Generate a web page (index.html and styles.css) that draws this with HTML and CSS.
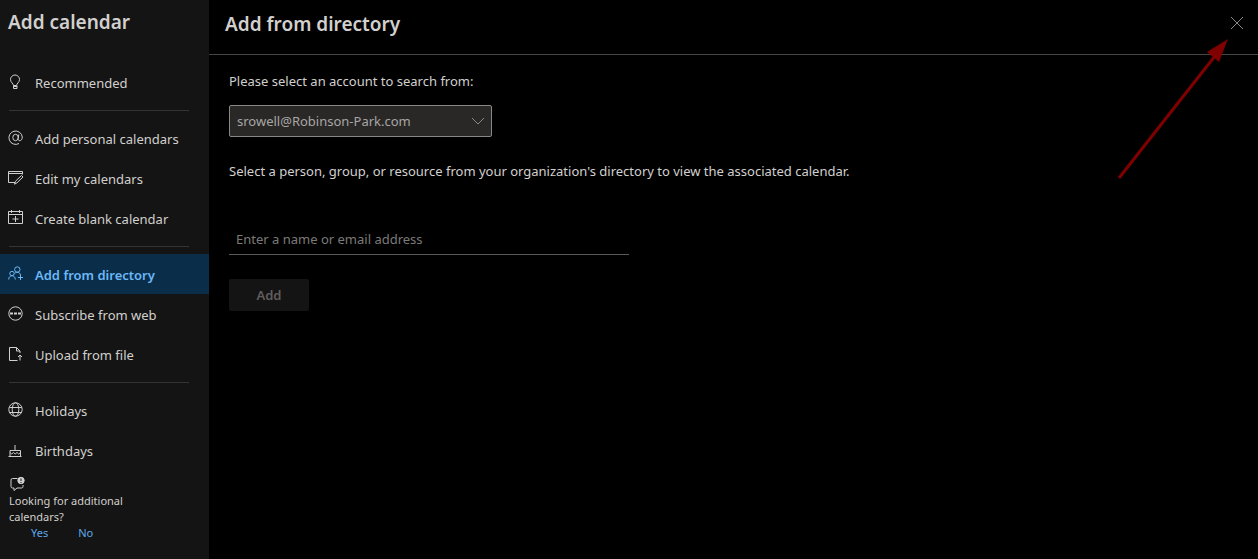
FILE: index.html
```html
<!DOCTYPE html>
<html lang="en">
<head>
    <meta charset="UTF-8">
    <meta name="viewport" content="width=device-width, initial-scale=1.0">
    <title>Add calendar</title>
    <link rel="stylesheet" href="styles.css">
</head>
<body>
    <div class="app">
        <aside class="sidebar">
            <h1>Add calendar</h1>
            <nav class="menu">
                <button type="button" class="menu-item">
                    <svg class="icon" viewBox="0 0 16 16"><path d="M5.500 11.500C5.500 9.500 2.500 8.500 2.500 5.500a4.500 4.500 0 0 1 9 0c0 3-3 4-3 6zM5.500 11.500v3h3.500v-3M5.500 12.500h3.500"/></svg>
                    <span>Recommended</span>
                </button>
                <hr>
                <button type="button" class="menu-item">
                    <svg class="icon" viewBox="0 0 16 16"><path d="M11 13.500A6.700 6.700 0 1 1 14.300 7c0 2.500-1.300 3.700-2.500 3.700S10 9.800 10.200 8.500l.6-4"/><ellipse cx="7.500" cy="7.500" rx="2.700" ry="3.200"/></svg>
                    <span>Add personal calendars</span>
                </button>
                <button type="button" class="menu-item">
                    <svg class="icon" viewBox="0 0 16 16"><path d="M7 12.500H.5v-11h14v3M.5 3.500h14M6.500 14.200l1-3 6-5.700 1.500 1.500-6 5.800z"/></svg>
                    <span>Edit my calendars</span>
                </button>
                <button type="button" class="menu-item">
                    <svg class="icon" viewBox="0 0 16 16"><path d="M.5 1.500h14v12H.5zM.5 4.500h14M3.500 0v3M11.500 0v3M7.500 6v6M4.500 9h6"/></svg>
                    <span>Create blank calendar</span>
                </button>
                <hr>
                <button type="button" class="menu-item active">
                    <svg class="icon" viewBox="0 0 16 16"><circle cx="9.300" cy="3.500" r="2.700"/><circle cx="4" cy="7.500" r="2.200"/><path d="M.7 13.500c0-5 6.600-5 6.600 0M6.500 7.500c2-2 5.500-1.500 6 1.500M12.500 9v5M10 11.500h5"/></svg>
                    <span>Add from directory</span>
                </button>
                <button type="button" class="menu-item">
                    <svg class="icon" viewBox="0 0 16 16"><circle cx="7.500" cy="7.500" r="6.700"/><path class="thick" d="M2 7.500h3M6 7.500h3M10 7.500h3"/></svg>
                    <span>Subscribe from web</span>
                </button>
                <button type="button" class="menu-item">
                    <svg class="icon" viewBox="0 0 16 16"><path d="M9.500 14.500h-8v-13h7l3.500 3.500v2M8.500 1.500v3.500h3.500M12 14.500V9M10 11l2-2 2 2"/></svg>
                    <span>Upload from file</span>
                </button>
                <hr>
                <button type="button" class="menu-item">
                    <svg class="icon" viewBox="0 0 16 16"><circle cx="7.500" cy="7.500" r="6.700"/><ellipse cx="7.500" cy="7.500" rx="3.300" ry="6.700"/><path d="M1.500 5.500h12M1.500 10.500h12"/></svg>
                    <span>Holidays</span>
                </button>
                <button type="button" class="menu-item">
                    <svg class="icon" viewBox="0 0 16 16"><path d="M.5 14.500h13M2 14.500v-6h10.500v6M2 10.500l1.700 1.500 1.700-1.500 1.800 1.500L9 10.500l1.700 1.500 1.800-1.500M7 3v5"/></svg>
                    <span>Birthdays</span>
                </button>
            </nav>
            <div class="feedback">
                <svg class="icon" viewBox="0 0 16 16"><path d="M8.500 2.500h-5A1.500 1.500 0 0 0 2 4v6.500A1.500 1.500 0 0 0 3.500 12H5v2.500L8 12h4.500a1.500 1.500 0 0 0 1.500-1.500V9"/><circle class="dot" cx="12" cy="4.500" r="3.200"/><path class="mark" d="M12 2.500v2.500M12 6v1"/></svg>
                <p>Looking for additional calendars?</p>
                <div class="answers">
                    <a href="#">Yes</a>
                    <a href="#">No</a>
                </div>
            </div>
        </aside>

        <main class="panel">
            <header class="panel-header">
                <h2>Add from directory</h2>
                <button type="button" class="close" aria-label="Close">
                    <svg viewBox="0 0 12 12"><path d="M0 0l12 12M12 0L0 12"/></svg>
                </button>
            </header>
            <form class="directory-form">
                <label for="account">Please select an account to search from:</label>
                <div class="select-wrap">
                    <select id="account" name="account">
                        <option>srowell@Robinson-Park.com</option>
                    </select>
                    <svg class="chevron" viewBox="0 0 12 12"><path d="M0 3l6 6 6-6"/></svg>
                </div>
                <label for="person">Select a person, group, or resource from your organization's directory to view the associated calendar.</label>
                <input type="text" id="person" name="person" placeholder="Enter a name or email address">
                <button type="submit" class="add" disabled>Add</button>
            </form>
        </main>

        <!-- pointer to the close button -->
        <svg class="arrow" viewBox="0 0 112 142"><path class="shaft" d="M2 140L98 18"/><path class="head" d="M111 1L90 14L102 24z"/></svg>
    </div>
</body>
</html>
```

FILE: styles.css
```css
* {
    box-sizing: border-box;
}
body {
    margin: 0;
    background-color: #000;
    color: #d2d0ce;
    font-family: 'Segoe UI', 'Noto Sans', sans-serif;
    font-size: 13px;
    line-height: 20px;
}
h1, h2, p {
    margin: 0;
}
h1, h2 {
    font-size: 19px;
    font-weight: 600;
    line-height: 28px;
}
button, input, select {
    font: inherit;
}
.app {
    position: relative;
    display: flex;
    min-height: 100vh;
}
.sidebar {
    flex: 0 0 209px;
    background-color: #141414;
}
.sidebar h1 {
    padding: 8px 8px 26px;
}
.menu-item {
    display: flex;
    align-items: center;
    gap: 11px;
    width: 100%;
    height: 40px;
    padding: 0 8px;
    border: none;
    background: none;
    color: inherit;
    text-align: left;
    cursor: pointer;
}
.menu-item span {
    padding-top: 2px;
}
.menu-item.active {
    background-color: #0a2e4a;
    color: #6cb8f6;
    font-weight: 600;
}
.menu hr {
    height: 1px;
    margin: 8px 20px 7px 9px;
    border: none;
    background-color: #343434;
}
.icon {
    display: block;
    flex: none;
    width: 16px;
    height: 16px;
    fill: none;
    stroke: currentColor;
}
.icon .thick {
    stroke-width: 2;
}
.feedback {
    padding: 6px 64px 16px 9px;
    font-size: 11px;
    line-height: 16px;
}
.feedback .icon {
    margin-bottom: 1px;
}
.feedback .dot {
    fill: #d2d0ce;
}
.feedback .mark {
    stroke: #141414;
}
.answers {
    display: flex;
    gap: 30px;
    padding-left: 22px;
}
.answers a {
    color: #5ca8ea;
    text-decoration: none;
}
.panel {
    flex: 1;
    min-width: 0;
}
.panel-header {
    display: flex;
    justify-content: space-between;
    align-items: center;
    padding: 10px 15px 16px 16px;
    border-bottom: 1px solid #484644;
}
.close {
    display: flex;
    padding: 0 0 2px;
    border: none;
    background: none;
    color: #8a8886;
    cursor: pointer;
}
.close svg, .chevron {
    width: 12px;
    height: 12px;
    fill: none;
    stroke: currentColor;
}
.directory-form {
    display: flex;
    flex-direction: column;
    align-items: flex-start;
    padding: 16px 20px;
}
.select-wrap {
    position: relative;
    width: 263px;
    max-width: 100%;
    margin: 14px 0 24px;
}
.select-wrap select {
    appearance: none;
    display: block;
    width: 100%;
    height: 32px;
    padding: 0 28px 0 7px;
    border: 1px solid #8a8886;
    border-radius: 2px;
    background-color: #292827;
    color: #a8a6a4;
}
.chevron {
    position: absolute;
    top: 10px;
    right: 8px;
    color: #8a8886;
    pointer-events: none;
}
.directory-form input {
    width: 400px;
    max-width: 100%;
    height: 32px;
    margin: 42px 0 24px;
    padding: 0 7px;
    border: none;
    border-bottom: 1px solid #5c5a58;
    background: none;
    color: inherit;
}
.directory-form input::placeholder {
    color: #7c7a78;
    opacity: 1;
}
.add {
    width: 80px;
    height: 32px;
    border: none;
    border-radius: 2px;
    background-color: #141414;
    color: #605e5c;
    font-weight: 600;
}
.arrow {
    position: absolute;
    top: 38px;
    right: 29px;
    width: 112px;
    height: 142px;
    pointer-events: none;
}
.arrow .shaft {
    stroke: #800000;
    stroke-width: 3;
}
.arrow .head {
    fill: #800000;
}
```
